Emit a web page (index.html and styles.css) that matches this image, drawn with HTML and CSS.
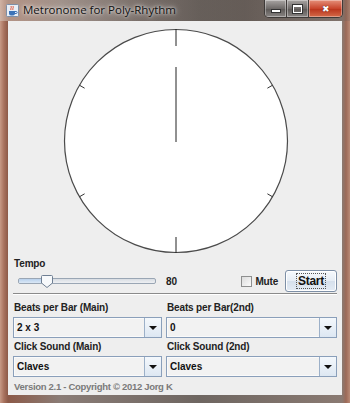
FILE: index.html
```html
<!DOCTYPE html>
<html lang="en">
<head>
    <meta charset="UTF-8">
    <title>Metronome for Poly-Rhythm</title>
    <link rel="stylesheet" href="styles.css">
</head>
<body>
    <div class="window">
        <div class="titlebar">
            <svg class="app-icon" width="13" height="13" viewBox="0 0 13 13">
                <rect x="0.5" y="0.5" width="12" height="12" rx="1" fill="#e8eef6" stroke="#7d8ea6"/>
                <path d="M3 7h6v2.5a2 2 0 0 1-2 2H5a2 2 0 0 1-2-2z" fill="#3c73b8"/>
                <path d="M9 7.5h1.2a1 1 0 0 1 0 2H9" fill="none" stroke="#3c73b8"/>
                <path d="M5 6c-1-1.5 1-2 0-4M7 6c-1-1.5 1-2 0-4" fill="none" stroke="#e0482a" stroke-width="0.9"/>
            </svg>
            <span class="title">Metronome for Poly-Rhythm</span>
            <div class="wm-buttons">
                <div class="wm-btn wm-min"><span class="min-bar"></span></div>
                <div class="wm-btn wm-max"><span class="max-box"></span></div>
                <div class="wm-btn wm-close">&#x2716;</div>
            </div>
        </div>

        <div class="content">
            <div class="dial">
                <svg width="226" height="226" viewBox="0 0 226 226">
                    <circle cx="113" cy="113" r="111.5" fill="#fff" stroke="#4a4a4a" stroke-width="1.2"/>
                    <!-- hand -->
                    <line x1="113" y1="39" x2="113" y2="114" stroke="#222" stroke-width="1"/>
                    <!-- ticks -->
                    <line x1="113" y1="1" x2="113" y2="18" stroke="#222"/>
                    <line x1="113" y1="209" x2="113" y2="225" stroke="#222"/>
                    <line x1="16.4" y1="57.2" x2="21.6" y2="60.2" stroke="#333"/>
                    <line x1="209.6" y1="57.2" x2="204.4" y2="60.2" stroke="#333"/>
                    <line x1="16.4" y1="168.8" x2="21.6" y2="165.8" stroke="#333"/>
                    <line x1="209.6" y1="168.8" x2="204.4" y2="165.8" stroke="#333"/>
                </svg>
            </div>

            <div class="label tempo-label">Tempo</div>
            <div class="tempo-row">
                <div class="slider">
                    <div class="track"><div class="track-fill"></div></div>
                    <svg class="thumb" width="12" height="13" viewBox="0 0 12 13">
                        <path d="M0.5 1.5a1 1 0 0 1 1-1h9a1 1 0 0 1 1 1v6.5l-5.5 4.5l-5.5-4.5z" fill="#f7f9fb" stroke="#6f7f93"/>
                    </svg>
                </div>
                <span class="tempo-value">80</span>
                <label class="mute"><span class="checkbox"></span>Mute</label>
                <button class="start"><span class="focus">Start</span></button>
            </div>
            <div class="separator"></div>

            <div class="settings">
                <div class="field">
                    <div class="label">Beats per Bar (Main)</div>
                    <div class="combo"><span class="combo-text">2 x 3</span><span class="combo-arrow"></span></div>
                </div>
                <div class="field">
                    <div class="label">Beats per Bar(2nd)</div>
                    <div class="combo"><span class="combo-text">0</span><span class="combo-arrow"></span></div>
                </div>
                <div class="field">
                    <div class="label">Click Sound (Main)</div>
                    <div class="combo"><span class="combo-text">Claves</span><span class="combo-arrow"></span></div>
                </div>
                <div class="field">
                    <div class="label">Click Sound (2nd)</div>
                    <div class="combo"><span class="combo-text">Claves</span><span class="combo-arrow"></span></div>
                </div>
            </div>

            <div class="version">Version 2.1 - Copyright &copy; 2012 Jorg K</div>
        </div>
    </div>
</body>
</html>
```
FILE: styles.css
```css
body {
    margin: 0;
    width: 350px;
    height: 403px;
    overflow: hidden;
    background: #5a4f4a;
    font-family: 'Liberation Sans', Arial, sans-serif;
}
.window {
    width: 350px;
    height: 403px;
    box-sizing: border-box;
    padding: 0 8px 8px 8px;
    background: linear-gradient(90deg, #c79a86 0px, #a8725e 4px, #8c5a48 8px, #8a7c76 60px, #6e6661 200px, #8a7a72 342px, #9c6a58 346px, #b98a76 350px);
    display: flex;
    flex-direction: column;
}
.titlebar {
    height: 21px;
    display: flex;
    align-items: center;
    position: relative;
    background: linear-gradient(90deg, rgba(215, 200, 190, 0.55), rgba(120, 110, 105, 0.2) 40%, rgba(60, 55, 52, 0.3) 70%, rgba(90, 85, 82, 0.2));
    margin: 0 -8px;
    padding: 0 8px 0 6px;
}
.app-icon {
    margin-right: 4px;
    margin-top: -1px;
}
.title {
    font-family: 'Open Sans', 'DejaVu Sans', sans-serif;
    font-size: 11.5px;
    color: #111;
    text-shadow: 0 0 6px rgba(255, 255, 255, 0.9), 0 0 3px rgba(255, 255, 255, 0.8);
    margin-top: -2px;
}
.wm-buttons {
    position: absolute;
    right: 7px;
    top: 0;
    display: flex;
    height: 17px;
    border: 1px solid #3e3a38;
    border-top: none;
    border-radius: 0 0 5px 5px;
    overflow: hidden;
}
.wm-btn {
    height: 17px;
    display: flex;
    align-items: center;
    justify-content: center;
    box-shadow: inset 0 0 0 1px rgba(255, 255, 255, 0.35);
}
.wm-min, .wm-max {
    width: 21px;
    background: linear-gradient(#a9a5a3, #6e6a68 50%, #5a5654 51%, #8a8684);
    border-right: 1px solid #3e3a38;
}
.min-bar {
    width: 8px;
    height: 2px;
    margin-top: 5px;
    background: #fff;
    box-shadow: 0 0 0 1px #333;
}
.max-box {
    width: 7px;
    height: 5px;
    border: 1px solid #fff;
    border-top-width: 2px;
    box-shadow: 0 0 0 1px #333;
}
.wm-close {
    width: 33px;
    color: #fff;
    font-size: 9px;
    background: linear-gradient(#e5907a, #c8452c 50%, #b8321a 51%, #d46a48);
    text-shadow: 0 0 1px #300;
}
.content {
    flex: 1;
    background: #eeeeee;
    padding: 7px 5px 0 5px;
    display: flex;
    flex-direction: column;
}
.dial {
    display: flex;
    justify-content: center;
    padding-left: 2px;
    height: 226px;
}
.label {
    font-size: 10px;
    font-weight: bold;
    letter-spacing: -0.15px;
    color: #222;
    line-height: 12px;
}
.tempo-label {
    margin-top: 4px;
    margin-left: 1px;
}
.tempo-row {
    display: flex;
    align-items: center;
    height: 22px;
}
.slider {
    position: relative;
    width: 138px;
    height: 16px;
    margin-left: 5px;
    display: flex;
    align-items: center;
}
.track {
    width: 138px;
    height: 4px;
    border: 1px solid #9aa6b4;
    border-radius: 2px;
    background: linear-gradient(#d8dde3, #eef0f3);
    overflow: hidden;
}
.track-fill {
    width: 28px;
    height: 4px;
    background: linear-gradient(#b7d0ec, #dbe8f6);
}
.thumb {
    position: absolute;
    left: 23px;
    top: 2px;
}
.tempo-value {
    font-size: 10px;
    font-weight: bold;
    color: #222;
    margin-left: 10px;
}
.mute {
    display: flex;
    align-items: center;
    font-size: 10px;
    font-weight: bold;
    letter-spacing: -0.2px;
    color: #222;
    margin-left: auto;
}
.checkbox {
    width: 9px;
    height: 9px;
    border: 1px solid #8e8f8f;
    background: linear-gradient(135deg, #dcdcdc, #fbfbfb);
    margin-right: 3px;
}
.start {
    margin-left: 7px;
    width: 52px;
    height: 22px;
    padding: 0;
    border: 1px solid #7d8fa6;
    border-radius: 3px;
    background: linear-gradient(#f6f9fc, #e6edf5 50%, #d6e0ec 51%, #e4ecf5);
    font-family: 'Liberation Sans', Arial, sans-serif;
    font-size: 12px;
    font-weight: bold;
    letter-spacing: -0.3px;
    color: #111;
    box-shadow: inset 0 0 0 1px #fff;
}
.focus {
    padding: 0 1px;
    border: 1px dotted #555;
}
.separator {
    height: 0;
    border-top: 1px solid #8a8a8a;
    border-bottom: 1px solid #fff;
    margin-top: 1px;
}
.settings {
    display: grid;
    grid-template-columns: 149px 171px;
    column-gap: 4px;
    row-gap: 3px;
    margin-top: 7px;
}
.field .label {
    margin-left: 1px;
    margin-bottom: 3px;
}
.combo {
    height: 19px;
    border: 1px solid #8a9fba;
    background: #f2f2f2;
    display: flex;
    align-items: center;
    box-shadow: inset 0 0 0 1px #fafafa;
}
.combo-text {
    flex: 1;
    font-size: 10px;
    font-weight: bold;
    color: #111;
    padding-left: 3px;
}
.combo-arrow {
    width: 16px;
    height: 19px;
    border-left: 1px solid #9cb0c8;
    background: linear-gradient(#f4f8fc, #dde7f2);
    position: relative;
}
.combo-arrow::after {
    content: "";
    position: absolute;
    left: 4px;
    top: 8px;
    border-left: 4px solid transparent;
    border-right: 4px solid transparent;
    border-top: 4px solid #111;
}
.version {
    font-size: 9.5px;
    font-weight: bold;
    letter-spacing: -0.3px;
    line-height: 12px;
    color: #7a7a7a;
    margin-top: 4px;
    margin-left: 1px;
}
```
